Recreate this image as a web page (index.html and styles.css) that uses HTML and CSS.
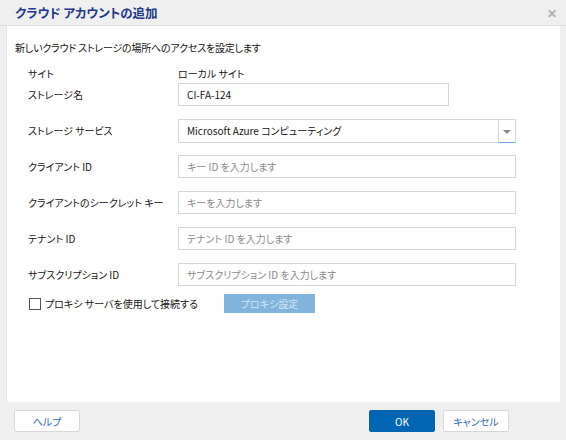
FILE: index.html
```html
<!DOCTYPE html>
<html lang="ja">
<head>
    <meta charset="UTF-8">
    <title>クラウド アカウントの追加</title>
    <link rel="stylesheet" href="styles.css">
</head>
<body>
    <div class="dialog">
        <!-- Titelleiste -->
        <div class="titlebar">
            <div class="title">クラウド アカウントの追加</div>
            <div class="close">✕</div>
        </div>

        <div class="content">
            <p class="intro">新しいクラウド ストレージの場所へのアクセスを設定します</p>

            <div class="form">
                <div class="row row-site">
                    <span class="label">サイト</span>
                    <span class="value">ローカル サイト</span>
                </div>
                <div class="row">
                    <span class="label">ストレージ名</span>
                    <div class="input input-short">CI-FA-124</div>
                </div>
                <div class="row">
                    <span class="label">ストレージ サービス</span>
                    <div class="input select">
                        <span class="select-text">Microsoft Azure コンピューティング</span>
                        <span class="arrow"></span>
                    </div>
                </div>
                <div class="row">
                    <span class="label">クライアント ID</span>
                    <div class="input placeholder">キー ID を入力します</div>
                </div>
                <div class="row">
                    <span class="label">クライアントのシークレット キー</span>
                    <div class="input placeholder">キーを入力します</div>
                </div>
                <div class="row">
                    <span class="label">テナント ID</span>
                    <div class="input placeholder">テナント ID を入力します</div>
                </div>
                <div class="row">
                    <span class="label">サブスクリプション ID</span>
                    <div class="input placeholder">サブスクリプション ID を入力します</div>
                </div>
                <div class="proxy">
                    <span class="checkbox"></span>
                    <span class="proxy-label">プロキシ サーバを使用して接続する</span>
                    <span class="btn-proxy">プロキシ設定</span>
                </div>
            </div>
        </div>

        <!-- Fußleiste -->
        <div class="footer">
            <span class="btn">ヘルプ</span>
            <div class="footer-right">
                <span class="btn btn-ok">OK</span>
                <span class="btn">キャンセル</span>
            </div>
        </div>
    </div>
</body>
</html>
```

FILE: styles.css
```css
/* Grundlegende Stile */
* {
    box-sizing: border-box;
    margin: 0;
    padding: 0;
}

body {
    font-family: "Noto Sans CJK JP", "Noto Sans", sans-serif;
    font-feature-settings: "palt";
    font-size: 10px;
    color: #151515;
    background-color: #efefef;
}

.dialog {
    width: 566px;
    height: 440px;
    display: flex;
    flex-direction: column;
}

.titlebar {
    height: 26px;
    padding: 0 9px 0 15px;
    display: flex;
    justify-content: space-between;
    align-items: center;
    border-bottom: 1px solid #dcdcdc;
}

.title {
    font-size: 12.5px;
    font-weight: bold;
    color: #233a8c;
}

.close {
    font-size: 12px;
    font-weight: bold;
    color: #b0b0b0;
}

.content {
    flex: 1;
    background-color: #fff;
    margin: 0 6px;
    border-left: 1px solid #e4e4e4;
    padding: 15px 8px 0;
}

.intro {
    line-height: 14px;
    letter-spacing: -0.2px;
    margin-bottom: 11px;
}

.form {
    padding-left: 13px;
}

.row {
    display: flex;
    align-items: center;
    height: 23px;
    margin-bottom: 13px;
}

.row-site {
    height: 14px;
    margin-bottom: 3px;
}

.label {
    width: 150px;
    flex-shrink: 0;
}

.input {
    width: 338px;
    height: 23px;
    border: 1px solid #d6d6d6;
    display: flex;
    align-items: center;
    padding-left: 8px;
}

.input-short {
    width: 271px;
}

.placeholder {
    color: #8a8a8a;
}

.select {
    height: 24px;
    padding-right: 0;
    justify-content: space-between;
}

.arrow {
    width: 17px;
    height: 23px;
    border-left: 1px solid #d6d6d6;
    border-bottom: 1px solid #6aa6e0;
    margin-bottom: -1px;
    position: relative;
}

.arrow::after {
    content: "";
    position: absolute;
    left: 4px;
    top: 10px;
    border-left: 4px solid transparent;
    border-right: 4px solid transparent;
    border-top: 4px solid #8a8a8a;
}

.proxy {
    display: flex;
    align-items: center;
    height: 19px;
    margin-top: -5px;
    margin-left: 1px;
}

.checkbox {
    width: 12px;
    height: 12px;
    border: 1px solid #555;
    margin-right: 4px;
}

.proxy-label {
    width: 179px;
}

.btn-proxy {
    width: 91px;
    height: 19px;
    background-color: #80b4dd;
    color: #d4e6f5;
    display: flex;
    align-items: center;
    justify-content: center;
}

.footer {
    height: 38px;
    padding: 0 57px 0 14px;
    display: flex;
    justify-content: space-between;
    align-items: center;
}

.footer-right {
    display: flex;
    gap: 8px;
}

.btn {
    width: 66px;
    height: 22px;
    background-color: #fff;
    border: 1px solid #d8d8d8;
    border-radius: 2px;
    color: #2d6cb6;
    display: flex;
    align-items: center;
    justify-content: center;
}

.btn-ok {
    background-color: #0066b3;
    border-color: #0066b3;
    color: #fff;
}
```
